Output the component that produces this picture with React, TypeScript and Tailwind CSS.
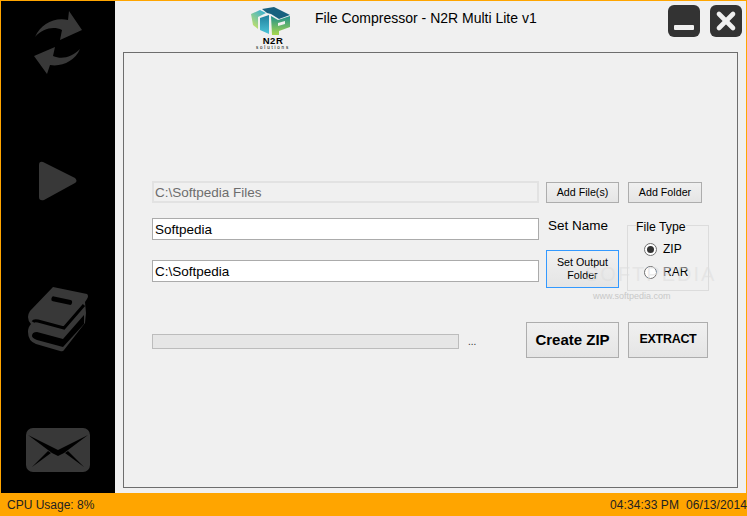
import { X } from "lucide-react";

const font = "font-['Liberation_Sans',Arial,sans-serif]";

function Logo() {
  return (
    <div className="flex w-[52px] flex-col items-center">
      <svg className="ml-[-4px]" width="40" height="28" viewBox="0 0 40 28">
        <defs>
          <linearGradient id="lime" x1="0" y1="1" x2="0.6" y2="0">
            <stop offset="0" stopColor="#d8e85a" />
            <stop offset="1" stopColor="#45b4c8" />
          </linearGradient>
          <linearGradient id="teal" x1="0" y1="0" x2="0" y2="1">
            <stop offset="0" stopColor="#1f7f9c" />
            <stop offset="1" stopColor="#4cc4d8" />
          </linearGradient>
          <linearGradient id="leaf" x1="0" y1="0" x2="0" y2="1">
            <stop offset="0" stopColor="#1f8f8c" />
            <stop offset="1" stopColor="#a8d84e" />
          </linearGradient>
        </defs>
        <path d="M11 2 L23 0 L39 8 L28 12 L20 7 L16 6 Z" fill="#17617f" />
        <path d="M0 7 L9 3 L15 6 L7 10 L7 22 L2 18 Z" fill="url(#lime)" />
        <path d="M9 11 L18 8 L18 27 L9 23 Z" fill="url(#teal)" />
        <path fillRule="evenodd" d="M20 9 L27 13 L39 9 L39 20 L28 24 L28 28 L21 28 Z M27 16 L34 14 L34 17 L27 19 Z" fill="url(#leaf)" />
      </svg>
      <span className={`${font} mt-[1px] text-[9.5px] leading-[9px] font-bold tracking-[0.5px] text-black`}>N2R</span>
      <span className={`${font} text-[4.5px] leading-[5px] tracking-[1.8px] text-black`}>solutions</span>
    </div>
  );
}

function SyncIcon() {
  return (
    <svg width="48" height="64" viewBox="0 0 48 64" fill="#383838">
      <path d="M1 26 C7 13 20 6 34 9 L35 0 L48 19 L26 29 L28 19 C20 15 9 17 1 26 Z" />
      <path d="M46 38 C41 50 28 56 16 54 L13 63 L0 45 L21 36 L19 45 C28 49 38 46 46 38 Z" />
    </svg>
  );
}

function PlayIcon() {
  return (
    <svg width="40" height="40" viewBox="0 0 40 40" fill="#383838">
      <path d="M1 4 Q1 0 5 1 L37 17 Q40 20 37 22 L6 39 Q1 40 1 36 Z" />
    </svg>
  );
}

function BooksIcon() {
  return (
    <svg width="60" height="66" viewBox="0 0 60 66">
      <path d="M25 0 L59 7 Q61 9 59 12 L57 15 L58 26 L57 36 L36 63 Q35 65 32 64 L8 57 Q0 54 0 45 Q0 40 3 37 Q0 34 0 30 Q0 27 2 24 Z" fill="#383838" />
      <path d="M56 18 L36 41 L10 34 Q6 33 5 35" fill="none" stroke="#000" strokeWidth="3" />
      <path d="M9 45 L35 52 L56 28 L56 37 L35 60 L9 53 Q4 51 4 49 Q4 45 9 45 Z" fill="#000" />
      <rect x="0" y="0" width="21" height="5" rx="2" transform="translate(24 9) rotate(12)" fill="#000" />
    </svg>
  );
}

function MailIcon() {
  return (
    <svg width="64" height="44" viewBox="0 0 64 44">
      <rect width="64" height="44" rx="7" fill="#383838" />
      <path d="M2 7 L32 22 L62 7 L38 25 L32 28 L26 25 Z" fill="#000" />
      <path d="M6 39 L22 23 L25 25 Z M58 39 L42 23 L39 25 Z" fill="#000" />
    </svg>
  );
}

function Btn({ children, className }: { children: React.ReactNode; className: string }) {
  return (
    <button className={`flex items-center justify-center border bg-gradient-to-b from-[#f0f0f0] to-[#e5e5e5] text-center text-black ${className}`}>
      {children}
    </button>
  );
}

function Radio({ label, on }: { label: string; on?: boolean }) {
  return (
    <div className="flex h-[22px] items-center gap-[6px]">
      <span className="flex h-[13px] w-[13px] items-center justify-center rounded-full border border-[#707070] bg-white">
        {on && <span className="h-[7px] w-[7px] rounded-full bg-[#333]" />}
      </span>
      <span className="text-[12px] text-black">{label}</span>
    </div>
  );
}

export default function App() {
  return (
    <div className={`${font} flex h-[516px] w-[747px] flex-col overflow-hidden bg-[#ffa500]`}>
      <div className="flex min-h-0 flex-1 pt-[1px] pr-[1px] pl-[1px]">
        <aside className="flex w-[114px] flex-col items-center bg-black pt-[10px]">
          <SyncIcon />
          <div className="mt-[86px]"><PlayIcon /></div>
          <div className="mt-[86px]"><BooksIcon /></div>
          <div className="mt-[75px]"><MailIcon /></div>
        </aside>

        <main className="flex min-w-0 flex-1 flex-col bg-[#f0f0f0] px-[8px]">
          <header className="flex h-[51px] shrink-0 items-start">
            <div className="mt-[6px] ml-[124px]"><Logo /></div>
            <h1 className="mt-[8px] ml-[16px] text-[14px] leading-[18px] font-normal text-black">
              File Compressor - N2R Multi Lite v1
            </h1>
            <div className="mt-[4px] mr-[-4px] ml-auto flex gap-[10px]">
              <button className="flex h-[32px] w-[32px] items-end justify-center rounded-[6px] bg-[#333] pb-[7px]">
                <span className="h-[5px] w-[20px] rounded-[1px] bg-[#f0f0f0]" />
              </button>
              <button className="flex h-[32px] w-[32px] items-center justify-center rounded-[6px] bg-[#333]">
                <X className="h-[28px] w-[28px] text-[#f0f0f0]" strokeWidth={4} />
              </button>
            </div>
          </header>

          <section className="relative h-[436px] w-[615px] border border-[#6d6d6d] pt-[128px] pl-[28px]">
            <div className="flex items-center">
              <div className="flex h-[22px] w-[387px] items-center border-2 border-[#e2e2e2] bg-[#f0f0f0] pt-[2px] pl-[1px] text-[13.5px] text-[#6d6d6d]">
                C:\Softpedia Files
              </div>
              <Btn className="ml-[7px] h-[21px] w-[73px] border-[#adadad] text-[10.7px]">Add File(s)</Btn>
              <Btn className="ml-[9px] h-[21px] w-[74px] border-[#adadad] text-[10.7px]">Add Folder</Btn>
            </div>

            <div className="mt-[15px] flex items-start">
              <div className="flex w-[387px] flex-col gap-[20px]">
                <div className="flex h-[22px] items-center border border-[#ababab] bg-white pt-[2px] pl-[2px] text-[13.5px] text-black">Softpedia</div>
                <div className="flex h-[22px] items-center border border-[#ababab] bg-white pt-[2px] pl-[2px] text-[13.5px] text-black">C:\Softpedia</div>
              </div>
              <div className="ml-[7px] flex w-[73px] flex-col">
                <span className="mt-[-1px] ml-[2px] h-[33px] text-[13.5px] leading-[18px] text-black">Set Name</span>
                <Btn className="h-[38px] border-[#3399ff] text-[10.7px] leading-[13px]">Set Output<br />Folder</Btn>
              </div>
              <fieldset className="relative mt-[7px] ml-[8px] flex h-[66px] w-[82px] flex-col gap-[1px] border border-[#dcdcdc] pt-[12px] pl-[16px]">
                <span className="absolute top-[-6px] left-[8px] bg-[#f0f0f0] text-[12.3px] leading-[15px] text-black">File Type</span>
                <Radio label="ZIP" on />
                <Radio label="RAR" />
              </fieldset>
            </div>

            <div className="mt-[31px] flex items-start">
              <div className="mt-[12px] h-[15px] w-[307px] border border-[#bcbcbc] bg-[#e6e6e6]" />
              <span className="mt-[11px] ml-[9px] w-[58px] text-[10px] leading-[18px] text-[#333]">...</span>
              <Btn className="h-[36px] w-[93px] border-[#adadad] text-[15px] font-bold">Create ZIP</Btn>
              <Btn className="ml-[9px] h-[36px] w-[80px] border-[#adadad] pb-[2px] text-[12.5px] font-bold tracking-[-0.3px]">EXTRACT</Btn>
            </div>

            <div className="pointer-events-none absolute top-[206px] left-[461px] text-[20px] tracking-[2px] text-[#dedede]/60">SOFTPEDIA</div>
            <div className="pointer-events-none absolute top-[237px] left-[469px] text-[9px] text-[#c8c8c8]">www.softpedia.com</div>
          </section>
        </main>
      </div>

      <footer className="flex h-[23px] shrink-0 items-center justify-between pl-[7px] text-[12px] text-[#222]">
        <span>CPU Usage: 8%</span>
        <span className="whitespace-pre tracking-[0.1px]">04:34:33 PM  06/13/2014</span>
      </footer>
    </div>
  );
}
